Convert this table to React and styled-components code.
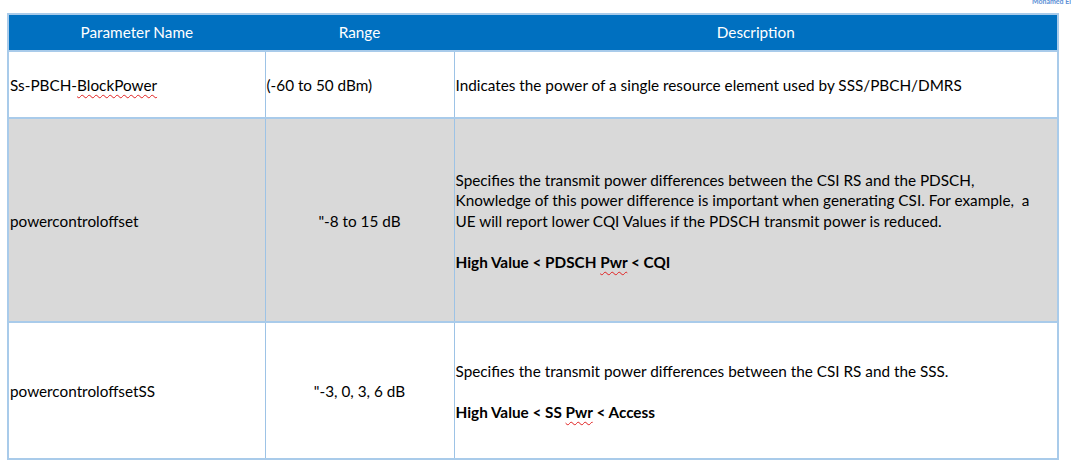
import React from 'react';
import styled, { createGlobalStyle } from 'styled-components';

const GlobalStyle = createGlobalStyle`
  body {
    margin: 0;
    background: #ffffff;
    font-family: Lato, "Open Sans", "Liberation Sans", sans-serif;
  }
`;

const Page = styled.div`
  position: relative;
  width: 1071px;
  height: 475px;
  padding: 13px 0 0 7px;
  box-sizing: border-box;
  overflow: hidden;
`;

const Author = styled.div`
  position: absolute;
  top: -3px;
  right: 0;
  font-size: 7px;
  font-weight: 700;
  color: #5b8fd6;
  white-space: nowrap;
`;

const Table = styled.table`
  width: 1052px;
  border-collapse: collapse;
  table-layout: fixed;
  border: 2px solid #a9cbea;
  font-size: 15.3px;
  line-height: 20.5px;
  color: #000;
`;

const HeadCell = styled.th`
  height: 35px;
  padding: 0;
  background: #0070c0;
  color: #ffffff;
  font-weight: 400;
  text-align: center;
  border-left: 1px solid #0070c0;
  border-bottom: 2px solid #a9cbea;
`;

const Row = styled.tr`
  height: ${p => p.$h}px;
  background: ${p => (p.$shaded ? '#d9d9d9' : '#ffffff')};
  border-bottom: 2px solid #a9cbea;
`;

const Cell = styled.td`
  padding: 2px 1px 0;
  vertical-align: middle;
  text-align: ${p => p.$align || 'left'};
  border-right: 1px solid #9dc3e6;
  border-left: 1px solid #9dc3e6;
`;

const Para = styled.p`
  margin: 0;
  font-weight: ${p => (p.$bold ? 700 : 400)};
  & + & {
    margin-top: 20.5px;
  }
`;

const Misspelt = styled.span`
  text-decoration-line: underline;
  text-decoration-style: wavy;
  text-decoration-color: #e02020;
  text-decoration-thickness: 1px;
  text-underline-offset: 3px;
`;

const rows = [
  {
    h: 67,
    name: <>Ss-PBCH-<Misspelt>BlockPower</Misspelt></>,
    range: '(-60 to 50 dBm)',
    rangeAlign: 'left',
    desc: [<Para key="a">Indicates the power of a single resource element used by SSS/PBCH/DMRS</Para>],
  },
  {
    h: 204,
    shaded: true,
    name: 'powercontroloffset',
    range: '"-8 to 15 dB',
    rangeAlign: 'center',
    desc: [
      <Para key="a">
        Specifies the transmit power differences between the CSI RS and the PDSCH,
        <br />
        Knowledge of this power difference is important when generating CSI. For example,&nbsp; a
        <br />
        UE will report lower CQI Values if the PDSCH transmit power is reduced.
      </Para>,
      <Para key="b" $bold>High Value &lt; PDSCH <Misspelt>Pwr</Misspelt> &lt; CQI</Para>,
    ],
  },
  {
    h: 137,
    name: 'powercontroloffsetSS',
    range: '"-3, 0, 3, 6 dB',
    rangeAlign: 'center',
    desc: [
      <Para key="a">Specifies the transmit power differences between the CSI RS and the SSS.</Para>,
      <Para key="b" $bold>High Value &lt; SS <Misspelt>Pwr</Misspelt> &lt; Access</Para>,
    ],
  },
];

export default function App() {
  return (
    <Page>
      <GlobalStyle />
      <Author>Mohamed El</Author>
      <Table>
        <colgroup>
          <col style={{ width: 257 }} />
          <col style={{ width: 189 }} />
          <col />
        </colgroup>
        <thead>
          <tr>
            <HeadCell>Parameter Name</HeadCell>
            <HeadCell>Range</HeadCell>
            <HeadCell>Description</HeadCell>
          </tr>
        </thead>
        <tbody>
          {rows.map((r, i) => (
            <Row key={i} $h={r.h} $shaded={r.shaded}>
              <Cell>{r.name}</Cell>
              <Cell $align={r.rangeAlign}>{r.range}</Cell>
              <Cell>{r.desc}</Cell>
            </Row>
          ))}
        </tbody>
      </Table>
    </Page>
  );
}
